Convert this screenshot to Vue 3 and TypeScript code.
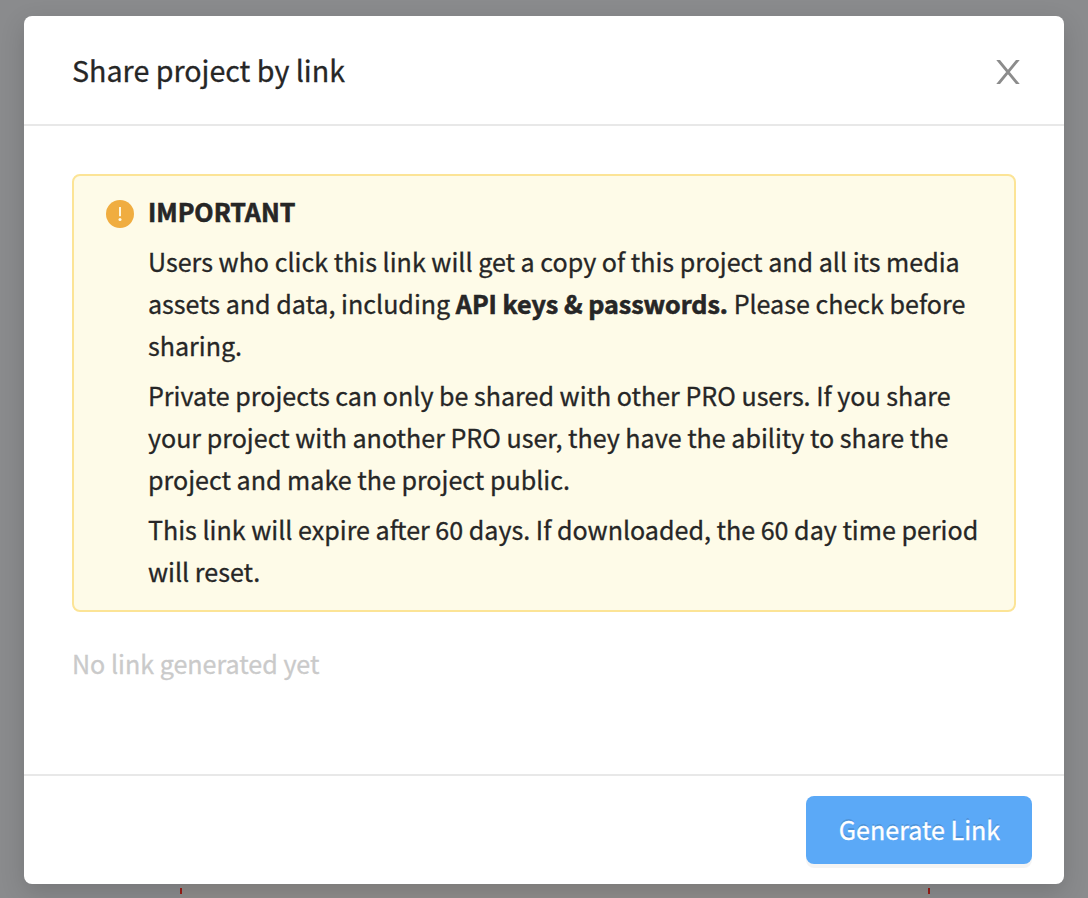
<script setup lang="ts">
interface Segment {
  text: string
  kind?: 'strong' | 'tight'
}

const paragraphs: Segment[][][] = [
  [
    [{ text: 'Users who click this link will get a copy of this project and all its media' }],
    [
      { text: 'assets and data, including ' },
      { text: 'API keys & passwords.', kind: 'strong' },
      { text: ' Please check before' },
    ],
    [{ text: 'sharing.' }],
  ],
  [
    [{ text: 'Private projects can only be shared with other PRO users. If you share' }],
    [{ text: 'your project with another PRO user, they have the ability to share the' }],
    [{ text: 'project and make the project public.' }],
  ],
  [
    [
      { text: 'This link will expire a' },
      { text: 'f', kind: 'tight' },
      { text: 'ter 60 days. If downloaded, the 60 day time period' },
    ],
    [{ text: 'will reset.' }],
  ],
]
</script>

<template>
  <div class="backdrop">
    <i class="canvas-edge"></i>
    <i class="mark mark-left"></i>
    <i class="mark mark-right"></i>
    <section class="modal" role="dialog" aria-label="Share project by link">
      <header class="head">
        <h1 class="title">Share project by link</h1>
        <button class="close" aria-label="Close">
          <svg width="24" height="24" viewBox="0 0 24 24">
            <path d="M0.9-1.5 23.1 25.5M23.1-1.5 0.9 25.5" fill="none" stroke="#8c8c8c" stroke-width="2.9" />
          </svg>
        </button>
      </header>
      <div class="body">
        <div class="alert">
          <svg class="alert-icon" width="28" height="28" viewBox="0 0 28 28">
            <circle cx="14" cy="14" r="14" fill="#f0ad40" />
            <rect x="13.05" y="7" width="1.9" height="9.3" rx="0.3" fill="#fffbe6" />
            <circle cx="14" cy="19.5" r="1.5" fill="#fffbe6" />
          </svg>
          <div class="alert-text">
            <h2 class="alert-title">IMPORTANT</h2>
            <p v-for="(lines, p) in paragraphs" :key="p">
              <span v-for="(line, l) in lines" :key="l" class="line"><span v-for="(s, i) in line" :key="i" :class="s.kind">{{ s.text }}</span></span>
            </p>
          </div>
        </div>
        <div class="empty">No link generated yet</div>
      </div>
      <footer class="foot">
        <button class="primary">Generate Link</button>
      </footer>
    </section>
  </div>
</template>

<style>
body {
  margin: 0;
}
</style>

<style scoped>
.backdrop {
  position: relative;
  box-sizing: border-box;
  width: 1088px;
  height: 898px;
  padding: 16px 24px 14px;
  overflow: hidden;
  background: #8a8b8d;
  color: #262626;
  font-family: "Noto Sans CJK SC", "Noto Sans", sans-serif;
  font-size: 25.07px;
  line-height: 42px;
  -webkit-text-stroke: 0.3px currentColor;
}
.canvas-edge {
  position: absolute;
  top: 884px;
  left: 180px;
  width: 750px;
  height: 14px;
  background: #8f8d8c;
}
.mark {
  position: absolute;
  top: 888px;
  width: 2px;
  height: 6px;
  background: #9a1c16;
}
.mark-left {
  left: 180px;
}
.mark-right {
  left: 928px;
}
.modal {
  position: relative;
  display: flex;
  flex-direction: column;
  height: 868px;
  border-radius: 8px;
  background: #fff;
  box-shadow: 0 8px 24px rgba(0, 0, 0, 0.15);
}
.head {
  box-sizing: border-box;
  display: flex;
  align-items: center;
  justify-content: space-between;
  height: 110px;
  padding: 0 44px 0 48px;
  border-bottom: 2px solid #e8e8e8;
}
.title {
  margin: 0;
  font-size: 28.65px;
  font-weight: 400;
  white-space: nowrap;
}
.close {
  display: flex;
  margin-top: 4px;
  padding: 0;
  border: 0;
  background: none;
}
.body {
  flex: 1;
  padding: 48px 48px 0;
}
.alert {
  box-sizing: border-box;
  display: flex;
  gap: 14px;
  height: 438px;
  padding: 14px 32px 18px;
  border: 2px solid #fce496;
  border-radius: 8px;
  background: #fefbe8;
}
.alert-icon {
  flex: none;
  margin-top: 10px;
}
.alert-title {
  margin: 0;
  font-size: inherit;
  font-weight: 700;
  -webkit-text-stroke-width: 0.6px;
}
.alert-text p {
  margin: 8px 0 0;
}
.line {
  display: block;
  white-space: pre;
}
.strong {
  font-weight: 700;
  -webkit-text-stroke-width: 0.6px;
}
.tight {
  letter-spacing: -0.8px;
}
.empty {
  margin-top: 30px;
  color: #cacaca;
}
.foot {
  box-sizing: border-box;
  display: flex;
  justify-content: flex-end;
  height: 110px;
  padding: 20px 32px;
  border-top: 2px solid #e8e8e8;
}
.primary {
  width: 226px;
  height: 68px;
  padding: 0 0 2px 1px;
  border: 0;
  border-radius: 8px;
  background: #5ba9f7;
  box-shadow: 0 4px 0 rgba(0, 0, 0, 0.045);
  color: #fff;
  font: inherit;
  text-shadow: 0 -2px 0 rgba(0, 0, 0, 0.12);
  -webkit-text-stroke: 0.3px currentColor;
}
</style>
